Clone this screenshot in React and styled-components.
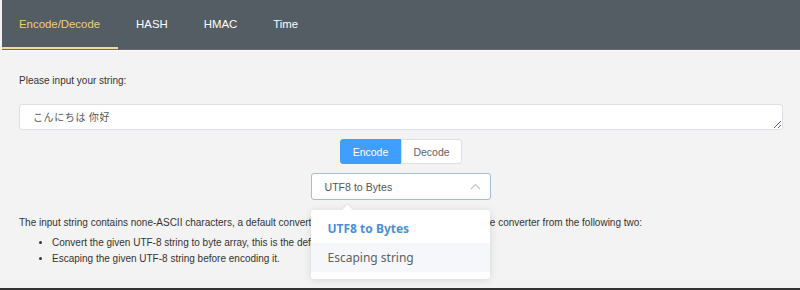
import React from "react";
import styled, { createGlobalStyle } from "styled-components";

const Global = createGlobalStyle`
  html, body { margin: 0; padding: 0; background: #f3f3f3; }
  body { font-family: "Liberation Sans", Arial, sans-serif; color: #333; }
  * { box-sizing: border-box; }
`;

const Page = styled.div`
  height: 290px;
  display: flex;
  flex-direction: column;
  border-bottom: 2px solid #333;
  overflow: hidden;
`;

const Header = styled.nav`
  height: 50px;
  flex: none;
  display: flex;
  background: #545c64;
  margin-left: 2px;
  border-bottom: 1px solid #6b6670;
  box-shadow: 0 1px 0 #fbfbfb;
`;

const Tab = styled.div`
  height: 49px;
  padding: 0 18px;
  display: flex;
  align-items: center;
  font-size: 11.4px;
  color: ${(p) => (p.$active ? "#f0cf7a" : "#ffffff")};
  border-bottom: 2px solid ${(p) => (p.$active ? "#f6d99a" : "transparent")};
  &:first-child { padding-left: 17px; }
`;

const Main = styled.main`
  flex: 1;
  padding: 24px 17px 0 19px;
  display: flex;
  flex-direction: column;
`;

const Label = styled.div`
  font-size: 10px;
  line-height: 14px;
  color: #333;
`;

const Input = styled.textarea`
  margin-top: 16px;
  height: 26px;
  width: 100%;
  border: 1px solid #dcdfe6;
  border-radius: 3px;
  background: #fff;
  padding: 4px 13px;
  font-family: "Noto Sans CJK JP", "Noto Sans CJK SC", sans-serif;
  font-size: 10px;
  line-height: 16px;
  letter-spacing: 0.6px;
  color: #555;
  resize: vertical;
  outline: none;
`;

const Controls = styled.div`
  margin-top: 9px;
  display: flex;
  flex-direction: column;
  align-items: center;
  gap: 9px;
  position: relative;
`;

const Group = styled.div`
  display: flex;
`;

const Btn = styled.div`
  width: 61px;
  height: 25px;
  display: flex;
  align-items: center;
  justify-content: center;
  font-size: 10.5px;
  background: ${(p) => (p.$primary ? "#409eff" : "#fff")};
  color: ${(p) => (p.$primary ? "#fff" : "#606266")};
  border: 1px solid ${(p) => (p.$primary ? "#409eff" : "#dcdfe6")};
  border-radius: ${(p) => (p.$primary ? "3px 0 0 3px" : "0 3px 3px 0")};
`;

const SelectWrap = styled.div`
  position: relative;
  width: 180px;
  margin-right: 1px;
`;

const Select = styled.div`
  height: 27px;
  border: 1px solid #a3bfd6;
  border-radius: 3px;
  background: #fff;
  display: flex;
  align-items: center;
  justify-content: space-between;
  padding: 0 9px 0 13px;
  font-size: 10.6px;
  color: #555;
`;

const Menu = styled.div`
  position: absolute;
  top: 37px;
  left: 0;
  width: 179px;
  background: #fff;
  border-radius: 3px;
  box-shadow: 0 1px 8px rgba(0, 0, 0, 0.12);
  padding: 4px 0 7px;
  z-index: 5;
  &::before {
    content: "";
    position: absolute;
    top: -4px;
    left: 33px;
    width: 7px;
    height: 7px;
    background: #fff;
    transform: rotate(45deg);
    box-shadow: -1px -1px 2px rgba(0, 0, 0, 0.06);
  }
`;

const Item = styled.div`
  height: 29px;
  display: flex;
  align-items: center;
  padding: 0 17px;
  font-family: "Noto Sans", sans-serif;
  font-size: 12px;
  font-weight: ${(p) => (p.$selected ? 700 : 400)};
  color: ${(p) => (p.$selected ? "#4a90d9" : "#606266")};
  background: ${(p) => (p.$hover ? "#f5f7fa" : "#fff")};
  position: relative;
`;

const Desc = styled.p`
  margin: 16px 0 0;
  font-size: 10px;
  line-height: 14px;
  color: #333;
`;

const List = styled.ul`
  margin: 5px 0 0;
  padding-left: 33px;
  font-size: 10px;
  line-height: 16px;
  color: #333;
`;

const Chevron = () => (
  <svg width="11" height="7" viewBox="0 0 11 7" fill="none">
    <path d="M1 6 L5.5 1.5 L10 6" stroke="#c0c4cc" strokeWidth="1.2" />
  </svg>
);

export default function App() {
  return (
    <>
      <Global />
      <Page>
        <Header>
          <Tab $active>Encode/Decode</Tab>
          <Tab>HASH</Tab>
          <Tab>HMAC</Tab>
          <Tab>Time</Tab>
        </Header>
        <Main>
          <Label>Please input your string:</Label>
          <Input defaultValue="こんにちは 你好" rows={1} />
          <Controls>
            <Group>
              <Btn $primary>Encode</Btn>
              <Btn>Decode</Btn>
            </Group>
            <SelectWrap>
              <Select>
                <span>UTF8 to Bytes</span>
                <Chevron />
              </Select>
              <Menu>
                <Item $selected>UTF8 to Bytes</Item>
                <Item $hover>Escaping string</Item>
              </Menu>
            </SelectWrap>
          </Controls>
          <Desc>
            The input string contains none-ASCII characters, a default converter is selected, or you can also choose the converter from the following two:
          </Desc>
          <List>
            <li>Convert the given UTF-8 string to byte array, this is the default option.</li>
            <li>Escaping the given UTF-8 string before encoding it.</li>
          </List>
        </Main>
      </Page>
    </>
  );
}
